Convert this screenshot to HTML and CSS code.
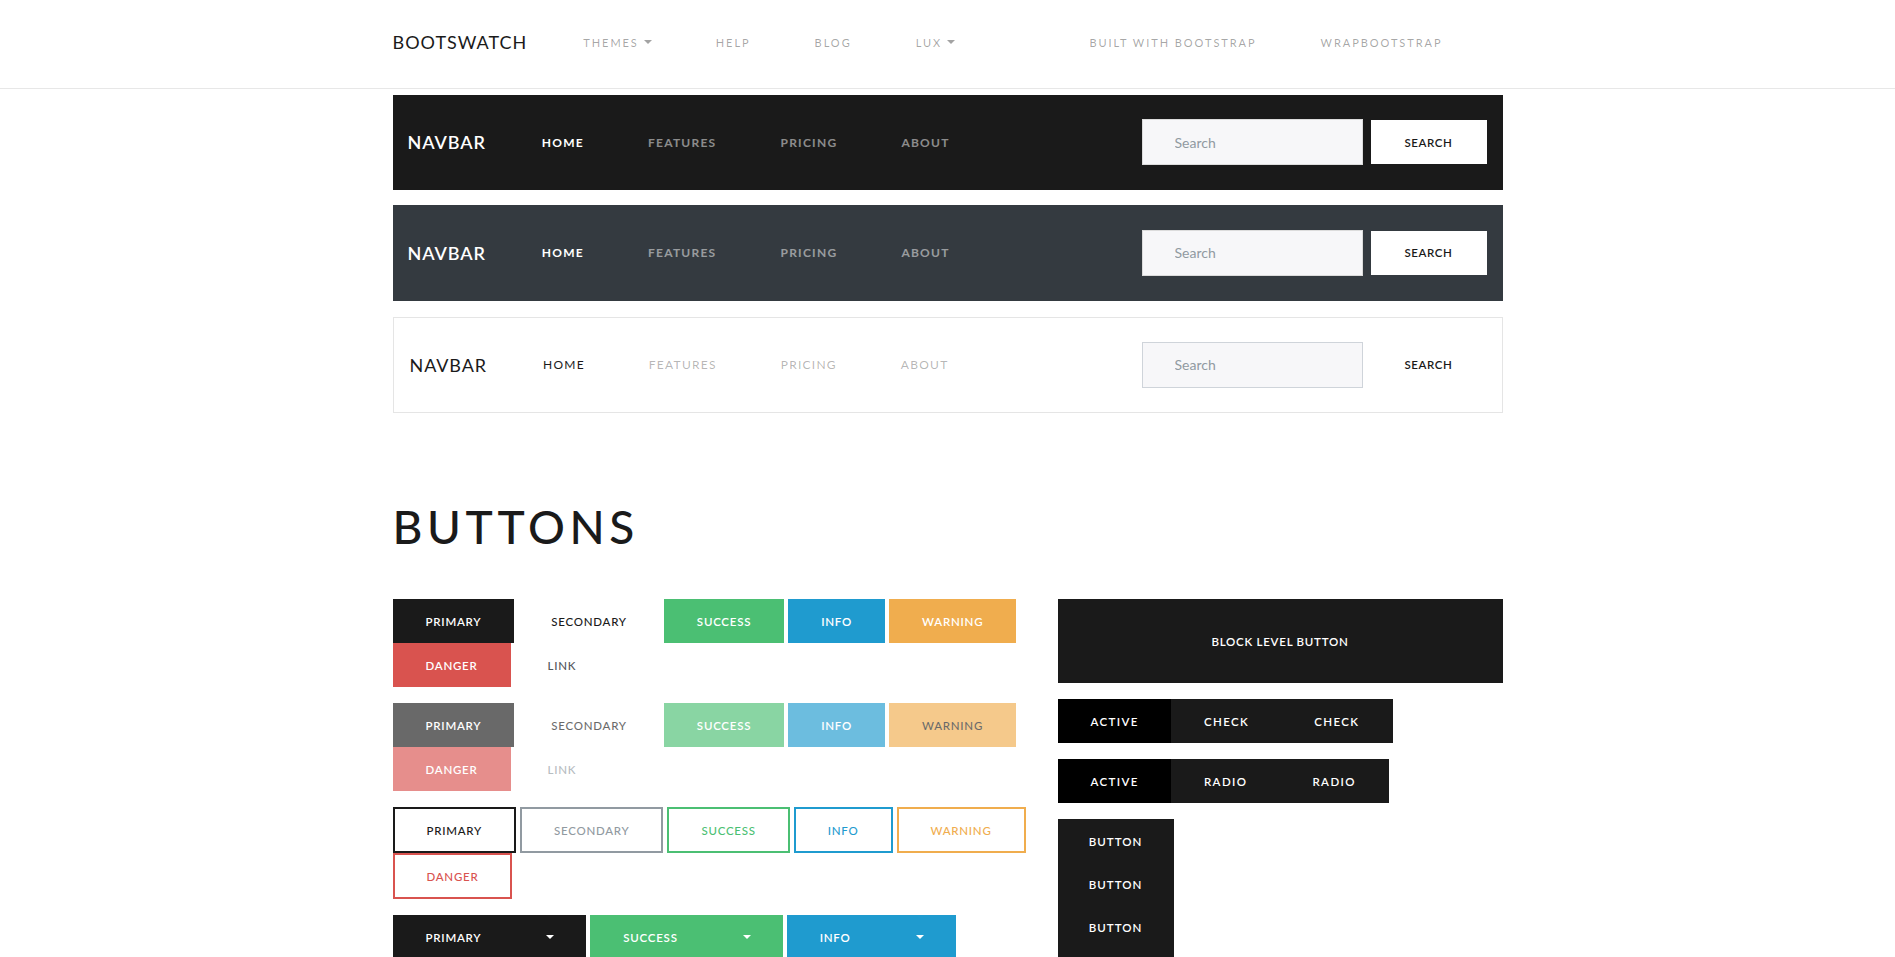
FILE: index.html
```html
<!DOCTYPE html>
<html lang="en">
<head>
<meta charset="utf-8">
<title>Bootswatch: Lux</title>
<link rel="stylesheet" href="styles.css">
</head>
<body>
<header class="topbar">
  <div class="topbar-inner">
    <a class="brand">Bootswatch</a>
    <nav class="top-nav">
      <a class="top-link">Themes<span class="caret"></span></a>
      <a class="top-link">Help</a>
      <a class="top-link">Blog</a>
      <a class="top-link">Lux<span class="caret"></span></a>
    </nav>
    <nav class="top-nav top-nav-right">
      <a class="top-link">Built With Bootstrap</a>
      <a class="top-link">WrapBootstrap</a>
    </nav>
  </div>
</header>

<main class="container">
  <section class="navbars">
    <div class="navbar navbar-dark nb-primary">
      <a class="nb-brand">Navbar</a>
      <ul class="nb-nav">
        <li class="nb-link active">Home</li>
        <li class="nb-link">Features</li>
        <li class="nb-link">Pricing</li>
        <li class="nb-link">About</li>
      </ul>
      <form class="nb-form">
        <input class="nb-input" type="text" placeholder="Search">
        <button class="nb-search" type="button">Search</button>
      </form>
    </div>

    <div class="navbar navbar-dark nb-dark">
      <a class="nb-brand">Navbar</a>
      <ul class="nb-nav">
        <li class="nb-link active">Home</li>
        <li class="nb-link">Features</li>
        <li class="nb-link">Pricing</li>
        <li class="nb-link">About</li>
      </ul>
      <form class="nb-form">
        <input class="nb-input" type="text" placeholder="Search">
        <button class="nb-search" type="button">Search</button>
      </form>
    </div>

    <div class="navbar navbar-light nb-light">
      <a class="nb-brand">Navbar</a>
      <ul class="nb-nav">
        <li class="nb-link active">Home</li>
        <li class="nb-link">Features</li>
        <li class="nb-link">Pricing</li>
        <li class="nb-link">About</li>
      </ul>
      <form class="nb-form">
        <input class="nb-input" type="text" placeholder="Search">
        <button class="nb-search nb-search-plain" type="button">Search</button>
      </form>
    </div>
  </section>

  <section class="buttons-section">
    <h1 class="section-title">Buttons</h1>
    <div class="btn-cols">
      <div class="col-left">
        <div class="btn-row">
          <div class="btn-line">
            <button class="btn btn-primary">Primary</button>
            <button class="btn btn-secondary">Secondary</button>
            <button class="btn btn-success">Success</button>
            <button class="btn btn-info">Info</button>
            <button class="btn btn-warning">Warning</button>
          </div>
          <div class="btn-line">
            <button class="btn btn-danger">Danger</button>
            <button class="btn btn-link">Link</button>
          </div>
        </div>

        <div class="btn-row disabled">
          <div class="btn-line">
            <button class="btn btn-primary">Primary</button>
            <button class="btn btn-secondary">Secondary</button>
            <button class="btn btn-success">Success</button>
            <button class="btn btn-info">Info</button>
            <button class="btn btn-warning btn-warning-dis">Warning</button>
          </div>
          <div class="btn-line">
            <button class="btn btn-danger">Danger</button>
            <button class="btn btn-link btn-link-dis">Link</button>
          </div>
        </div>

        <div class="btn-row">
          <div class="btn-line">
            <button class="btn btn-outline o-primary">Primary</button>
            <button class="btn btn-outline o-secondary">Secondary</button>
            <button class="btn btn-outline o-success">Success</button>
            <button class="btn btn-outline o-info">Info</button>
            <button class="btn btn-outline o-warning">Warning</button>
          </div>
          <div class="btn-line">
            <button class="btn btn-outline o-danger">Danger</button>
          </div>
        </div>

        <div class="btn-row">
          <div class="btn-line">
            <div class="split">
              <button class="btn btn-primary">Primary</button>
              <button class="btn btn-primary split-toggle"><span class="caret caret-white"></span></button>
            </div>
            <div class="split">
              <button class="btn btn-success">Success</button>
              <button class="btn btn-success split-toggle"><span class="caret caret-white"></span></button>
            </div>
            <div class="split">
              <button class="btn btn-info">Info</button>
              <button class="btn btn-info split-toggle"><span class="caret caret-white"></span></button>
            </div>
          </div>
        </div>
      </div>

      <div class="col-right">
        <div class="btn-row">
          <button class="btn btn-primary btn-block">Block level button</button>
        </div>
        <div class="btn-row">
          <div class="btn-group">
            <button class="btn btn-primary btn-g is-active">Active</button>
            <button class="btn btn-primary btn-g">Check</button>
            <button class="btn btn-primary btn-g">Check</button>
          </div>
        </div>
        <div class="btn-row">
          <div class="btn-group">
            <button class="btn btn-primary btn-g is-active">Active</button>
            <button class="btn btn-primary btn-g">Radio</button>
            <button class="btn btn-primary btn-g">Radio</button>
          </div>
        </div>
        <div class="btn-row">
          <div class="btn-group-vertical">
            <button class="btn btn-primary btn-g">Button</button>
            <button class="btn btn-primary btn-g">Button</button>
            <button class="btn btn-primary btn-g">Button</button>
            <button class="btn btn-primary btn-g">Button</button>
          </div>
        </div>
      </div>
    </div>
  </section>
</main>
</body>
</html>
```

FILE: styles.css
```css
* { box-sizing: border-box; }
html, body { margin: 0; padding: 0; }
body {
  font-family: "Lato", "Liberation Sans", sans-serif;
  color: #55595c;
  background: #fff;
}
a { color: inherit; text-decoration: none; }
ul { list-style: none; margin: 0; padding: 0; }

/* top bar */
.topbar {
  height: 89px;
  border-bottom: 1px solid #e7e7e7;
}
.topbar-inner {
  width: 1110px;
  margin: 0 auto;
  height: 88px;
  padding-bottom: 4px;
  display: flex;
  align-items: center;
}
.brand {
  font-size: 18px;
  letter-spacing: 1px;
  color: #1a1a1a;
  text-transform: uppercase;
  margin-right: 24px;
}
.top-nav { display: flex; align-items: center; }
.top-link {
  font-size: 11px;
  letter-spacing: 1.95px;
  text-transform: uppercase;
  color: rgba(0, 0, 0, 0.36);
  padding: 0 32px;
  display: flex;
  align-items: center;
}
.top-nav-right { margin-left: auto; margin-right: 28px; }

.caret {
  display: inline-block;
  width: 0;
  height: 0;
  margin-left: 5px;
  border-top: 4px solid currentColor;
  border-left: 4px solid transparent;
  border-right: 4px solid transparent;
}
.caret-white { color: #fff; margin-left: 0; }

/* page */
.container { width: 1110px; margin: 0 auto; }
.navbars { padding-top: 6px; }

.navbar {
  display: flex;
  align-items: center;
  height: 95px;
  padding: 0 16px 1px 15px;
  margin-bottom: 15px;
  text-transform: uppercase;
}
.nb-primary { background: #1a1a1a; }
.nb-dark { background: #343a40; height: 96px; margin-bottom: 16px; }
.nb-light {
  background: #fff;
  border: 1px solid #e5e5e5;
  height: 96px;
  padding-left: 16px;
  padding-right: 15px;
  margin-bottom: 0;
}

.nb-brand {
  font-size: 18px;
  letter-spacing: 0.9px;
  margin-right: 24px;
}
.navbar-dark .nb-brand { color: #fff; font-weight: 600; }
.navbar-light .nb-brand { color: #1a1a1a; font-weight: 400; }

.nb-nav { display: flex; }
.nb-link {
  padding: 0 32px;
  font-size: 12px;
  letter-spacing: 1.25px;
}
.navbar-dark .nb-link { color: rgba(255, 255, 255, 0.5); font-weight: 700; }
.navbar-dark .nb-link.active { color: #fff; }
.navbar-light .nb-link { color: rgba(0, 0, 0, 0.3); font-weight: 400; }
.navbar-light .nb-link.active { color: #1a1a1a; }

.nb-form { margin-left: auto; display: flex; align-items: center; }
.nb-input {
  width: 221px;
  height: 46px;
  margin: 0 8px 0 0;
  padding: 0 0 0 32px;
  background: #f7f7f9;
  border: 1px solid #dcdcdc;
  font-family: inherit;
  font-size: 14px;
  color: #55595c;
  outline: none;
}
.nb-light .nb-input { border-color: #cfd4da; }
.nb-input::placeholder { color: #919aa1; }
.nb-search {
  width: 116px;
  height: 44px;
  border: 0;
  background: #fff;
  color: #1a1a1a;
  font-family: inherit;
  font-size: 11.5px;
  font-weight: 600;
  letter-spacing: 0.6px;
  text-transform: uppercase;
  padding: 0;
}
.nb-search-plain { background: transparent; }

/* buttons section */
.buttons-section { padding-top: 87px; }
.section-title {
  margin: 0 0 45px;
  font-size: 46px;
  line-height: 54px;
  font-weight: 500;
  letter-spacing: 4.6px;
  color: #1a1a1a;
  text-transform: uppercase;
}
.btn-cols { display: flex; gap: 30px; }
.col-left { width: 635px; }
.col-right { width: 445px; }

.btn-row { margin-bottom: 16px; }
.btn-line { display: flex; gap: 4px; }

.btn {
  display: inline-flex;
  align-items: center;
  justify-content: center;
  height: 44px;
  padding: 0 32px;
  border: 1px solid transparent;
  font-family: inherit;
  font-size: 11.5px;
  font-weight: 600;
  letter-spacing: 0.75px;
  text-transform: uppercase;
  cursor: pointer;
  border-radius: 0;
}
.btn-primary { background: #1a1a1a; border-color: #1a1a1a; color: #fff; }
.btn-secondary { background: #fff; border-color: #fff; color: #1a1a1a; font-weight: 500; }
.btn-success { background: #4bbf73; border-color: #4bbf73; color: #fff; }
.btn-info { background: #1f9bcf; border-color: #1f9bcf; color: #fff; }
.btn-warning { background: #f0ad4e; border-color: #f0ad4e; color: #fff; }
.btn-danger { background: #d9534f; border-color: #d9534f; color: #fff; }
.btn-link { background: transparent; color: #55595c; font-weight: 500; }

.disabled .btn { opacity: 0.65; }
.disabled .btn-warning-dis { color: #1a1a1a; font-weight: 500; }
.disabled .btn-link-dis { color: #919aa1; }

.btn-outline {
  height: 46px;
  background: #fff;
  border-width: 2px;
  font-weight: 500;
}
.o-primary { border-color: #1a1a1a; color: #1a1a1a; }
.o-secondary { border-color: #919aa1; color: #919aa1; }
.o-success { border-color: #4bbf73; color: #4bbf73; }
.o-info { border-color: #1f9bcf; color: #1f9bcf; }
.o-warning { border-color: #f0ad4e; color: #f0ad4e; }
.o-danger { border-color: #d9534f; color: #d9534f; }

.split { display: flex; }
.split-toggle { width: 72px; padding: 0; }

.btn-block { width: 100%; height: 84px; }

.btn-group { display: flex; }
.btn-g { padding: 0 32px; letter-spacing: 1.4px; }
.btn-group .btn-g + .btn-g { margin-left: -1px; }
.btn-g.is-active { background: #000; border-color: #000; }
.btn-group-vertical { display: flex; flex-direction: column; width: 116px; }
.btn-group-vertical .btn-g { letter-spacing: 1px; }
.btn-group-vertical .btn-g + .btn-g { margin-top: -1px; }
```
